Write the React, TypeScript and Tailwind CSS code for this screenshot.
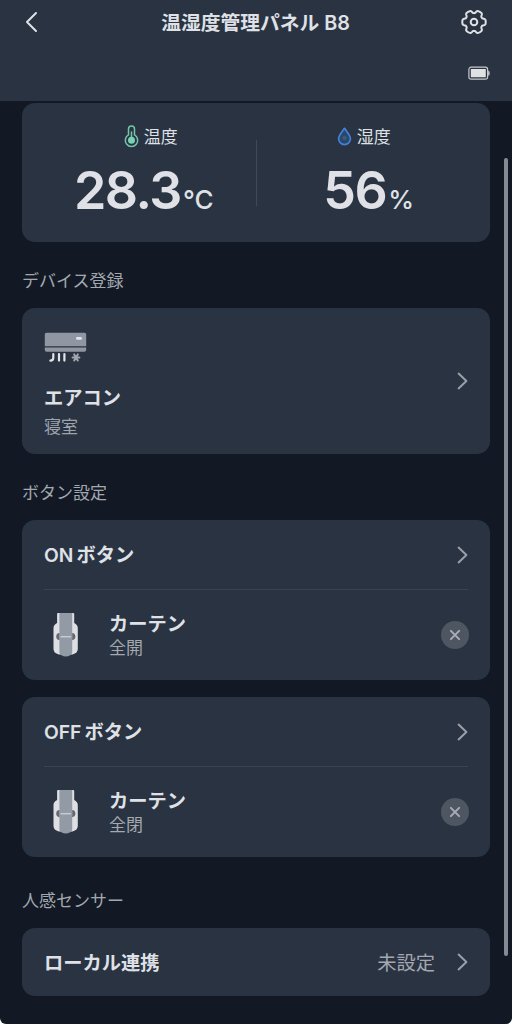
import type { ReactNode } from "react";
import clsx from "clsx";

const actions = [
  { prefix: "ON", device: "カーテン", action: "全開" },
  { prefix: "OFF", device: "カーテン", action: "全閉" },
];

export default function App() {
  return (
    <div className="h-[1024px] w-[512px] bg-white">
      <div className="relative h-full overflow-hidden rounded-b-[6px] bg-[#121924] font-['Inter','Noto_Sans_CJK_JP',sans-serif] text-[#dfe1e6]">
        <Header />
        <main className="px-[22px] pt-[2px]">
          <Card className="flex h-[139px] items-start px-[22px]">
            <Reading
              icon={<ThermometerIcon />}
              label="温度"
              value="28.3"
              unit="°C"
              labelClassName="ml-[2px]"
              valueClassName="mr-[12px]"
            />
            <div className="mt-[37px] h-[66px] w-px bg-[#414955]" />
            <Reading
              icon={<DropIcon />}
              label="湿度"
              value="56"
              unit="%"
              labelClassName="ml-[3px]"
              valueClassName="ml-[13px]"
            />
          </Card>

          <SectionTitle>デバイス登録</SectionTitle>
          <Card className="flex h-[146px] items-center justify-between px-[22px]">
            <div className="flex h-full flex-col pt-[24px]">
              <AirConditionerIcon />
              <span className="mt-[20px] text-[19.25px] leading-[28px] font-semibold">エアコン</span>
              <span className="mt-[3px] text-[17px] leading-[24px] text-[#9da3ad]">寝室</span>
            </div>
            <Chevron />
          </Card>

          <SectionTitle>ボタン設定</SectionTitle>
          <div className="flex flex-col gap-[17px]">
            {actions.map((item) => (
              <ButtonCard key={item.prefix} {...item} />
            ))}
          </div>

          <SectionTitle className="h-[71px] pt-[31px]">人感センサー</SectionTitle>
          <Card className="flex h-[68px] items-center px-[22px]">
            <span className="pt-[2px] text-[19.25px] leading-[28px] font-semibold">ローカル連携</span>
            <span className="mr-[21px] ml-auto pt-[2px] text-[19.25px] leading-[28px] text-[#a3a8b1]">未設定</span>
            <Chevron />
          </Card>
        </main>
        <div className="absolute top-[158px] right-[4px] h-[798px] w-[4px] rounded-full bg-[#868b93]" />
      </div>
    </div>
  );
}

function Header() {
  return (
    <header className="h-[101px] bg-[#2a3341]">
      <div className="flex h-[44px] items-center justify-between px-[25px]">
        <svg width="25" height="22" viewBox="0 0 25 22" fill="none" aria-label="戻る">
          <path d="M11 2 2 11l9 9" stroke="currentColor" strokeWidth="2" strokeLinecap="round" strokeLinejoin="round" />
        </svg>
        <h1 className="pt-px text-[19.75px] leading-[28px] font-semibold">温湿度管理パネル B8</h1>
        <GearIcon />
      </div>
      <div className="flex justify-end pt-[22px] pr-[22px]">
        <BatteryIcon />
      </div>
    </header>
  );
}

function Card({ className, children }: { className?: string; children: ReactNode }) {
  return <section className={clsx("rounded-[13px] bg-[#2a3341]", className)}>{children}</section>;
}

function SectionTitle({ className = "h-[66px] pt-[26px]", children }: { className?: string; children: ReactNode }) {
  return <h2 className={clsx("text-[17px] leading-[26px] text-[#a3a8b0]", className)}>{children}</h2>;
}

function Reading({
  icon,
  label,
  value,
  unit,
  labelClassName,
  valueClassName,
}: {
  icon: ReactNode;
  label: string;
  value: string;
  unit: string;
  labelClassName?: string;
  valueClassName?: string;
}) {
  return (
    <div className="flex flex-1 flex-col items-center pt-[20px]">
      <div className={clsx("flex h-[26px] items-center gap-[5px] text-[17px] leading-[26px]", labelClassName)}>
        {icon}
        <span className="pt-px">{label}</span>
      </div>
      <div className={clsx("mt-[10px] flex items-baseline gap-[2px] leading-[64px]", valueClassName)}>
        <span className="text-[52px] font-semibold tracking-[-1.5px]">{value}</span>
        <span className="text-[26px] font-medium">{unit}</span>
      </div>
    </div>
  );
}

function ButtonCard({ prefix, device, action }: { prefix: string; device: string; action: string }) {
  return (
    <Card className="h-[160px] px-[22px]">
      <div className="flex h-[69px] items-center justify-between">
        <span className="flex gap-[3px] text-[19.25px] leading-[28px] font-semibold">
          <span>{prefix}</span>
          <span>ボタン</span>
        </span>
        <Chevron />
      </div>
      <div className="h-px bg-[#3a4350]" />
      <div className="flex h-[90px] items-center">
        <CurtainIcon />
        <div className="ml-[30px] flex flex-col pt-px">
          <span className="text-[19.25px] leading-[25px] font-semibold">{device}</span>
          <span className="text-[17px] leading-[23px] text-[#a3a8b1]">{action}</span>
        </div>
        <button
          type="button"
          aria-label="削除"
          className="-mr-px ml-auto flex size-[28px] items-center justify-center rounded-full bg-[#4e5661]"
        >
          <svg width="12" height="12" viewBox="0 0 12 12">
            <path d="m1.9 1.9 8.2 8.2m0-8.2-8.2 8.2" stroke="#a9adb5" strokeWidth="2" strokeLinecap="round" />
          </svg>
        </button>
      </div>
    </Card>
  );
}

function Chevron() {
  return (
    <svg width="12" height="18" viewBox="0 0 12 18" fill="none">
      <path d="m2.6 1.6 7.8 7.4-7.8 7.4" stroke="#9a9fa8" strokeWidth="2" strokeLinecap="round" strokeLinejoin="round" />
    </svg>
  );
}

// six flat teeth, with rounded valleys between them
const gearPoints = Array.from({ length: 120 }, (_, i) => {
  const a = (i * Math.PI) / 60;
  const r = 10.2 + 1.5 * Math.tanh(2.2 * Math.cos(6 * a) + 0.8);
  return `${(13 + r * Math.cos(a)).toFixed(2)},${(13 + r * Math.sin(a)).toFixed(2)}`;
}).join(" ");

function GearIcon() {
  return (
    <svg width="26" height="26" viewBox="0 0 26 26" fill="none" stroke="currentColor" strokeWidth="2" strokeLinejoin="round">
      <polygon points={gearPoints} />
      <circle cx="13" cy="13" r="3.3" />
    </svg>
  );
}

function BatteryIcon() {
  return (
    <svg width="22" height="14" viewBox="0 0 22 14" fill="none">
      <rect x="0.9" y="1.2" width="18.7" height="12" rx="2.2" stroke="#c5c8cc" strokeWidth="1.2" />
      <rect x="2.8" y="3.1" width="15" height="8.2" rx="0.5" fill="#e0e1e2" />
      <path d="M20.2 4.6c1.2.4 1.4 1.2 1.4 2.6s-.2 2.2-1.4 2.6z" fill="#d0d2d5" />
    </svg>
  );
}

function ThermometerIcon() {
  return (
    <svg width="15" height="23" viewBox="0 0 15 23" fill="none">
      <path d="M4.5 9.8V3.9a3 3 0 0 1 6 0v5.9a6.2 6.2 0 1 1-6 0Z" stroke="#74c5ac" strokeWidth="1.5" />
      <path d="M7.5 7v8" stroke="#74c5ac" strokeWidth="1.5" strokeLinecap="round" />
      <circle cx="7.5" cy="15.3" r="3.5" fill="#7ad2b5" />
    </svg>
  );
}

function DropIcon() {
  return (
    <svg width="15" height="19" viewBox="0 0 14 19">
      <path
        d="M7 1.3C5.2 4 1.1 8.2 1.1 11.8a5.9 5.9 0 0 0 11.8 0C12.9 8.2 8.8 4 7 1.3Z"
        fill="#27486f"
        stroke="#4580d6"
        strokeWidth="1.7"
        strokeLinejoin="round"
      />
      <circle cx="7" cy="11" r="2.2" fill="#3e5a75" />
    </svg>
  );
}

function AirConditionerIcon() {
  return (
    <svg width="44" height="32" viewBox="0 0 44 32" fill="none">
      <path d="M2.5.8h38a1.7 1.7 0 0 1 1.7 1.7v11.7H.8V2.5A1.7 1.7 0 0 1 2.5.8Z" fill="#9197a2" />
      <path d="M.8 15.6h41.4v2.2a1.9 1.9 0 0 1-1.9 1.9H2.7a1.9 1.9 0 0 1-1.900-1.900z" fill="#9197a2" />
      <rect x="32" y="5" width="6" height="2.8" rx="1.4" fill="#e1e4eb" />
      <path d="M9.300 22v3.700c0 1.800-1 2.800-2.900 2.900M15 22v6.600M20.400 22v6.600" stroke="#e1e4e9" strokeWidth="2.200" strokeLinecap="round" />
      <path d="M30.200 22.400l3.600 6M33.800 22.400l-3.600 6M28.600 25.400h6.800" stroke="#a1a6ae" strokeWidth="2" strokeLinecap="round" />
    </svg>
  );
}

function CurtainIcon() {
  return (
    <svg width="35" height="44" viewBox="0 0 35 44">
      <path d="M14 0h15.200q1 0 1 1v9q3.600 1.800 3.600 5V36q0 4-5.300 5.500H14.800q-5.300-1.500-5.300-5.500V15q0-3.200 3.600-5V1q0-1 .9-1Z" fill="#dddfe2" />
      <path d="M15.400 0h12.800v40q-1.700 3.300-6.400 3.500-4.700-.2-6.400-3.500z" fill="#929aa5" />
      <path d="M15.400 20v7.200q-3.200-.4-3.200-3.600t3.200-3.600Zm12.800 0v7.200q3.200-.4 3.200-3.600T28.200 20Z" fill="#65696f" />
      <path d="M16.500 23.700h10.600" stroke="#c5cbd2" strokeWidth="1.500" />
    </svg>
  );
}
